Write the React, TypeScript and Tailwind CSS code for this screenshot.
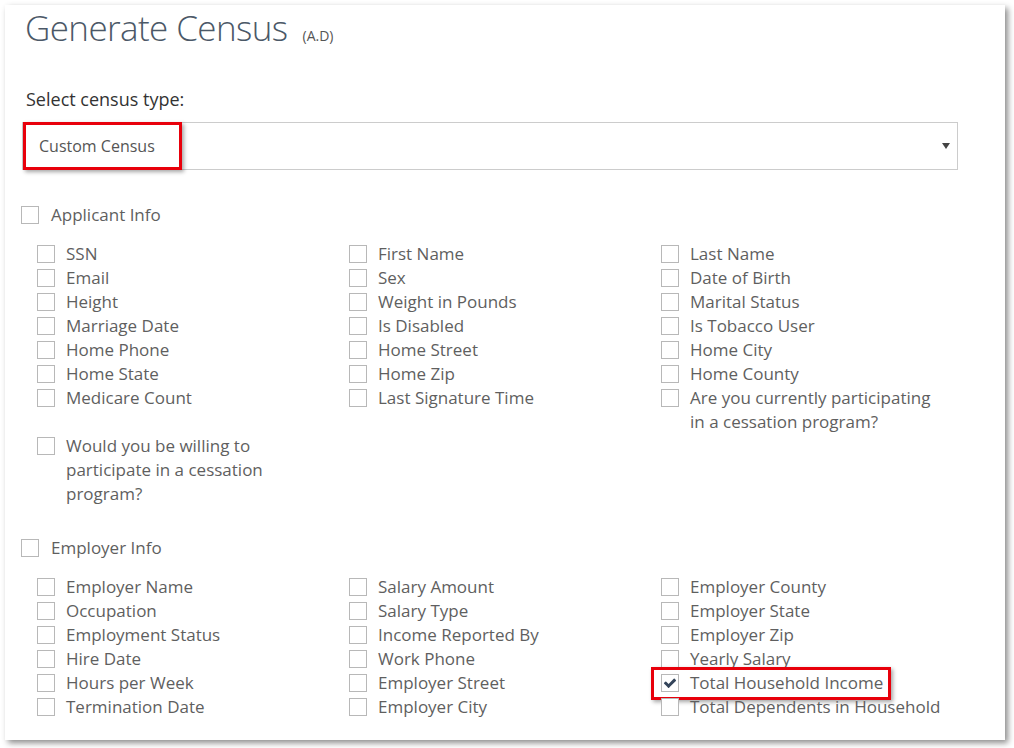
import React from "react"

const applicantFields = [
  "SSN",
  "First Name",
  "Last Name",
  "Email",
  "Sex",
  "Date of Birth",
  "Height",
  "Weight in Pounds",
  "Marital Status",
  "Marriage Date",
  "Is Disabled",
  "Is Tobacco User",
  "Home Phone",
  "Home Street",
  "Home City",
  "Home State",
  "Home Zip",
  "Home County",
  "Medicare Count",
  "Last Signature Time",
  "Are you currently participating in a cessation program?",
  "Would you be willing to participate in a cessation program?",
]

const employerFields = [
  "Employer Name",
  "Salary Amount",
  "Employer County",
  "Occupation",
  "Salary Type",
  "Employer State",
  "Employment Status",
  "Income Reported By",
  "Employer Zip",
  "Hire Date",
  "Work Phone",
  "Yearly Salary",
  "Hours per Week",
  "Employer Street",
  "Total Household Income",
  "Termination Date",
  "Employer City",
  "Total Dependents in Household",
]

function Box({ checked = false }: { checked?: boolean }) {
  return (
    <span className="mt-[3px] flex h-[18px] w-[18px] shrink-0 items-center justify-center border border-[#b8b8b8] bg-white">
      {checked && (
        <svg viewBox="0 0 1792 1792" className="h-[14px] w-[14px]" fill="#34445a">
          <path d="M1671 566q0 40-28 68l-724 724-136 136q-28 28-68 28t-68-28l-136-136-362-362q-28-28-28-68t28-68l136-136q28-28 68-28t68 28l294 295 656-657q28-28 68-28t68 28l136 136q28 28 28 68z" />
        </svg>
      )}
    </span>
  )
}

function Field({ label }: { label: string }) {
  const marked = label === "Total Household Income"
  return (
    <div className="px-[15px]">
      <div className="relative flex items-start">
        <Box checked={marked} />
        <span className="ml-[11px] leading-6">{label}</span>
        {marked && (
          <span className="pointer-events-none absolute left-[-10px] top-[-4px] h-[33px] w-[240px] border-[3px] border-[#e8000b] shadow-[2px_2px_4px_rgba(0,0,0,0.35)]" />
        )}
      </div>
    </div>
  )
}

function Section({ title, fields }: { title: string; fields: string[] }) {
  return (
    <div>
      <div className="-ml-px flex items-start">
        <Box />
        <span className="ml-3 leading-6">{title}</span>
      </div>
      <div className="mt-[15px] grid grid-cols-3">
        {fields.map((f) => (
          <Field key={f} label={f} />
        ))}
      </div>
    </div>
  )
}

export default function App() {
  return (
    <div className="h-[748px] w-[1014px] overflow-hidden bg-white pl-[5px] pt-[5px]" style={{ fontFamily: '"Open Sans", sans-serif' }}>
      <div className="h-[735px] w-[1000px] bg-white pl-[17px] pt-[3px] text-[17px] text-[#5f5f5f] shadow-[3px_3px_6px_rgba(0,0,0,0.45)]">
        <div className="w-[936px]">
          <h1 className="flex items-baseline pl-[3px] text-[35px] font-light leading-[40px] tracking-[-0.6px] text-[#4b5867]">
            Generate Census
            <small className="ml-[15px] text-[14px] font-normal tracking-normal text-[#555]">(A.D)</small>
          </h1>

          <div className="mt-[31px] pl-[4px] text-[18px] leading-6 text-[#333]">Select census type:</div>

          <div className="relative mt-[11px] flex h-[48px] items-center justify-between border border-[#cccccc] bg-white pl-4 pr-[7px] text-[16px] text-[#555]">
            <span>Custom Census</span>
            <span className="h-0 w-0 border-x-[4px] border-t-[6px] border-x-transparent border-t-[#444]" />
            <span className="pointer-events-none absolute left-0 top-[-1px] h-[48px] w-[159px] border-[3px] border-[#e8000b] shadow-[2px_2px_4px_rgba(0,0,0,0.35)]" />
          </div>

          <div className="mt-[33px]">
            <Section title="Applicant Info" fields={applicantFields} />
          </div>
          <div className="mt-[30px]">
            <Section title="Employer Info" fields={employerFields} />
          </div>
        </div>
      </div>
    </div>
  )
}
